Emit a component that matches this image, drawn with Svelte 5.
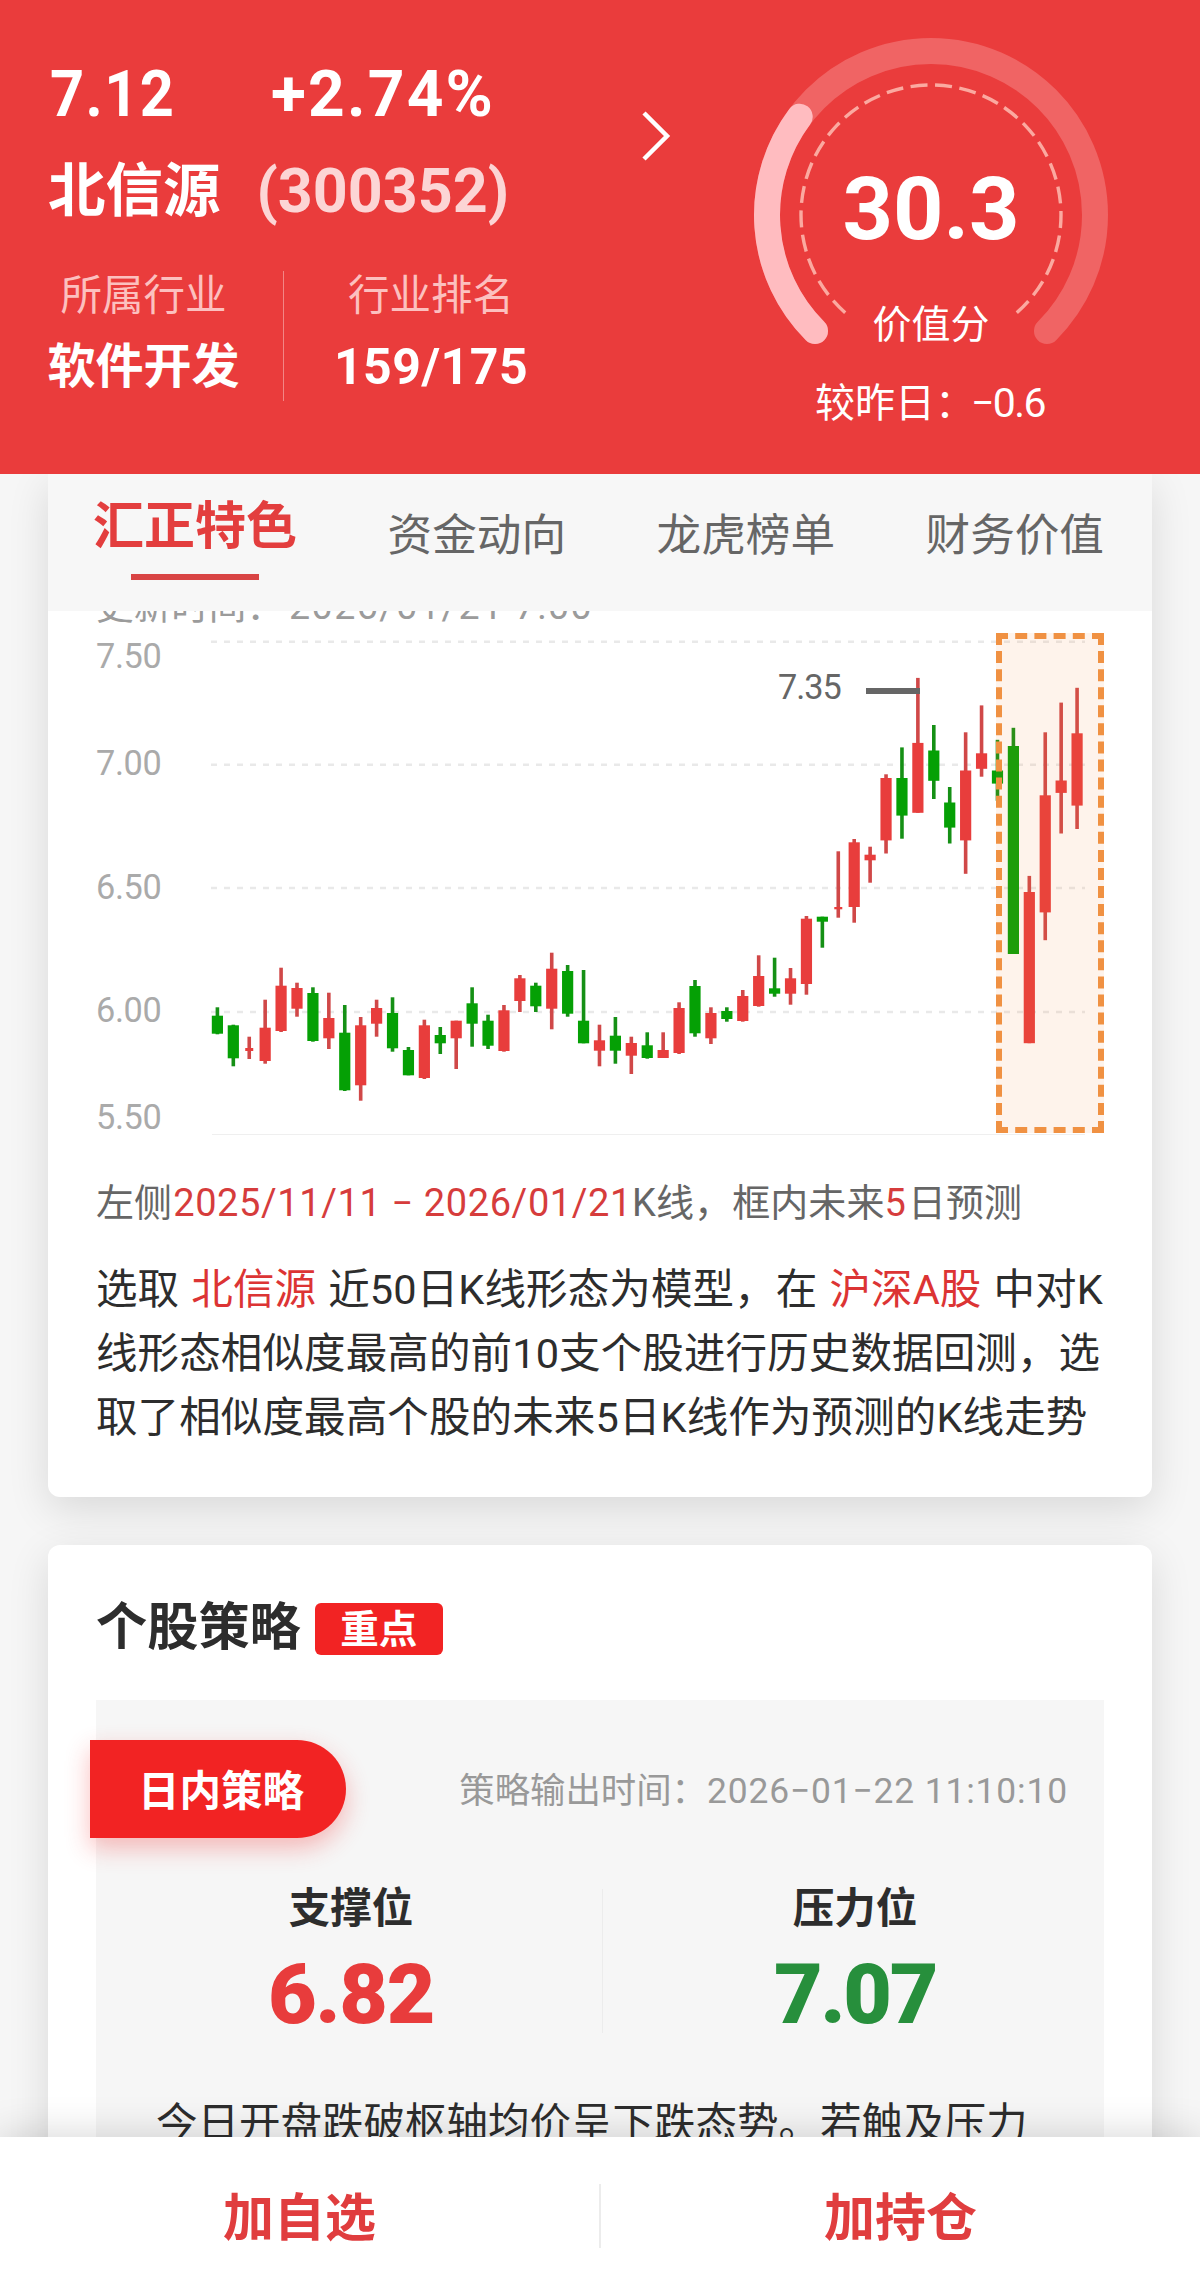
<script>
  const tabs = ['汇正特色', '资金动向', '龙虎榜单', '财务价值'];
  const active = 0;

  const gridLines = [641.7, 764.8, 888, 1012];
  const axis = [
    ['7.50', 668],
    ['7.00', 775],
    ['6.50', 899],
    ['6.00', 1022],
    ['5.50', 1129],
  ];

  // Each candle: rising flag, high, body top, body bottom, low
  const candles = [
    [0, 1007.3, 1015.7, 1033.7, 1034.3],
    [0, 1024.7, 1025.3, 1058.3, 1066.3],
    [1, 1036.7, 1048, 1051, 1059],
    [1, 999.7, 1027.7, 1061, 1063.7],
    [1, 967.7, 985.7, 1031, 1032],
    [1, 982.7, 988, 1008.7, 1016.7],
    [0, 987.3, 993, 1041, 1041.7],
    [1, 992.7, 1018, 1038.3, 1049],
    [0, 1005, 1032.7, 1090.3, 1091],
    [1, 1017, 1025.3, 1085.3, 1100.7],
    [1, 999.7, 1008, 1023.7, 1036.7],
    [0, 997.3, 1013, 1048.3, 1051.7],
    [0, 1047, 1050, 1075.3, 1075.3],
    [1, 1019.7, 1025.3, 1078, 1079],
    [0, 1027, 1035, 1043.3, 1054],
    [1, 1020.7, 1020.7, 1038.3, 1069],
    [0, 987.3, 1003.3, 1023.7, 1046.7],
    [0, 1014.7, 1020.7, 1045.7, 1049],
    [1, 1005, 1010.3, 1051, 1051.7],
    [1, 975, 978.3, 1001, 1012],
    [0, 982.7, 985.7, 1006.3, 1012],
    [1, 952.7, 968.7, 1008.7, 1029.3],
    [0, 965, 971, 1013.7, 1016.7],
    [0, 970, 1020.7, 1043.3, 1043.3],
    [1, 1024.7, 1040.3, 1050.7, 1066.3],
    [0, 1017, 1035.7, 1050.7, 1063.7],
    [1, 1036.7, 1043, 1055.7, 1074],
    [0, 1032.3, 1045.3, 1058, 1058.7],
    [1, 1032.3, 1050, 1058, 1058],
    [1, 1002.3, 1008, 1053, 1054],
    [0, 980, 986, 1033.3, 1036.7],
    [1, 1007.3, 1013, 1038.3, 1044],
    [0, 1007.3, 1011, 1019, 1021.7],
    [1, 990, 996, 1021, 1021.7],
    [1, 955.3, 976, 1006, 1006.7],
    [0, 957.7, 988.3, 993.7, 996.7],
    [1, 968, 978.3, 993.7, 1004.7],
    [1, 916, 918.7, 984, 994.7],
    [0, 916.7, 916.7, 921.7, 947.7],
    [1, 851.3, 907, 909.3, 917.7],
    [1, 839, 842.3, 907, 922.7],
    [1, 846.7, 854.7, 860.3, 882.7],
    [1, 774.3, 778, 840.4, 853.5],
    [0, 747.4, 778, 815.6, 838.7],
    [1, 677.9, 742.9, 812.8, 812.8],
    [0, 725, 750.5, 780.8, 799],
    [0, 787, 802.5, 827.6, 843.5],
    [1, 732.3, 770.5, 840.4, 873.8],
    [1, 705.4, 753.3, 768.8, 776.7],
    [0, 739.8, 770.5, 783.6, 800.8],
    [0, 727.8, 746, 954, 954],
    [1, 875.9, 892, 1043.2, 1043.2],
    [1, 732.3, 795.3, 912.4, 940.2],
    [1, 702.6, 780.5, 792.9, 833.5],
    [1, 687.8, 733.3, 805.6, 829],
  ].map(([up, high, top, bottom, low], i) => ({
    up: up === 1,
    high,
    top,
    bottom,
    low,
    x: 217.4 + i * 15.92,
    // dojis are drawn with a narrower body
    half: bottom - top < 4 ? 4 : 5.6,
  }));

  // Gauge arcs; angles are degrees clockwise from 12 o'clock
  function arc(r, from, to) {
    const at = (a) => {
      const t = (a * Math.PI) / 180;
      return `${(191 + r * Math.sin(t)).toFixed(2)} ${(215 - r * Math.cos(t)).toFixed(2)}`;
    };
    return `M${at(from)}A${r} ${r} 0 ${to - from > 180 ? 1 : 0} 1 ${at(to)}`;
  }
  const score = 30.3;
  const track = arc(164, -135, 135);
  const progress = arc(164, -135, -135 + 2.7 * score);
  const dashes = arc(130, -138.7, 138.7);
</script>

<div class="page">
  <header>
    <div class="stock">
      <div class="quote"><span class="price">7.12</span><span class="change">+2.74%</span></div>
      <div class="name"><span>北信源</span><span class="code">(300352)</span></div>
      <div class="stats">
        <div class="stat first"><small>所属行业</small><strong>软件开发</strong></div>
        <div class="stat second"><small>行业排名</small><strong class="rank">159/175</strong></div>
      </div>
    </div>
    <svg class="chevron" width="40" height="60" viewBox="0 0 40 60">
      <path d="M5 7L28 30L5 53" />
    </svg>
    <svg class="gauge" width="382" height="474" viewBox="0 0 382 474">
      <path class="track" d={track} />
      <path class="progress" d={progress} />
      <path class="ticks" d={dashes} />
      <text class="score" x="191" y="239">{score}</text>
      <text class="score-label" x="191" y="338">价值分</text>
      <text class="delta" x="75" y="417">较昨日：</text>
      <text class="delta num" x="231" y="417">−0.6</text>
    </svg>
  </header>

  <main>
    <section class="card feature">
      <nav>
        {#each tabs as tab, i}
          <span class="tab" class:active={i === active}>{tab}</span>
        {/each}
      </nav>
      <div class="updated"><span>更新时间：<b>2026/01/21 7:00</b></span></div>
      <div class="chart">
        <svg width="1104" height="535" viewBox="48 625 1104 535">
          {#each gridLines as y}
            <line class="grid" x1="211" x2="1085" y1={y} y2={y} />
          {/each}
          <line class="base" x1="212" x2="1085" y1="1134.5" y2="1134.5" />
          {#each axis as [label, y]}
            <text class="axis" x="96" {y}>{label}</text>
          {/each}
          {#each candles as c}
            <g class:up={c.up} class="candle">
              <rect class="wick" x={c.x - 1.8} y={c.high} width="3.6" height={c.low - c.high} />
              <rect x={c.x - c.half} y={c.top} width={c.half * 2} height={c.bottom - c.top} />
            </g>
          {/each}
          <rect class="peak-line" x="866" y="688" width="54" height="6" />
          <text class="peak" x="778" y="699">7.35</text>
        </svg>
        <div class="forecast"></div>
      </div>
      <p class="caption">左侧<em class="range">2025/11/11 − 2026/01/21</em>K线，框内未来<em class="days">5</em>日预测</p>
      <p class="desc">
        <span>选取 <em>北信源</em> 近50日K线形态为模型，在 <em>沪深A股</em> 中对K</span>
        <span>线形态相似度最高的前10支个股进行历史数据回测，选</span>
        <span>取了相似度最高个股的未来5日K线作为预测的K线走势</span>
      </p>
    </section>

    <section class="card strategy">
      <div class="title"><h2>个股策略</h2><span class="badge">重点</span></div>
      <div class="panel">
        <div class="bar">
          <span class="ribbon">日内策略</span>
          <span class="time">策略输出时间：<b>2026−01−22 11:10:10</b></span>
        </div>
        <div class="levels">
          <div class="level"><span>支撑位</span><strong class="support">6.82</strong></div>
          <div class="level right"><span>压力位</span><strong class="resist">7.07</strong></div>
        </div>
        <p class="note">今日开盘跌破枢轴均价呈下跌态势。若触及压力</p>
      </div>
    </section>
  </main>

  <footer>
    <span class="action">加自选</span>
    <i></i>
    <span class="action">加持仓</span>
  </footer>
</div>

<style>
  .page {
    width: 1200px;
    height: 2295px;
    display: flex;
    flex-direction: column;
    overflow: hidden;
    background: #f6f6f6;
    color: #2d2d2d;
    font-family: Roboto, 'Noto Sans CJK SC', sans-serif;
    white-space: nowrap;
  }
  em, b, small, i { font-style: normal; font-weight: inherit; }
  p, h2 { margin: 0; }

  header {
    position: relative;
    z-index: 2;
    flex: none;
    height: 474px;
    display: flex;
    background: #ea3c3c;
    color: #fff;
  }
  .stock { width: 589px; padding: 63px 0 0 50px; }
  .quote {
    display: flex;
    font-size: 64px;
    line-height: 64px;
    font-weight: 700;
  }
  .price { width: 221px; transform: scaleX(0.93); transform-origin: 0 50%; letter-spacing: 1.5px; }
  .change { letter-spacing: 2.2px; }
  .name {
    display: flex;
    margin: 36px 0 0 -2px;
    font-size: 57.5px;
    line-height: 58px;
    font-weight: 700;
  }
  .code {
    margin-left: 36px;
    font-size: 61px;
    line-height: 56px;
    color: #fcd5d5;
  }
  .stats { display: flex; margin-top: 50px; }
  .stat {
    display: flex;
    flex-direction: column;
    align-items: center;
    height: 130px;
    padding-top: 3px;
    box-sizing: border-box;
  }
  .stat small { font-size: 41.5px; line-height: 44px; color: #fcc0bf; }
  .stat strong { margin-top: 24px; font-size: 48px; line-height: 50px; }
  .stat .rank { font-size: 50px; letter-spacing: 0.5px; }
  .first { width: 234px; padding-right: 46px; border-right: 1px solid #f28685; box-sizing: border-box; }
  .second { margin-left: 52px; width: 190px; }
  .chevron { margin: 106px 0 0; fill: none; stroke: #fff; stroke-width: 4.5; }
  .gauge { margin-left: 61px; fill: none; }
  .track { stroke: #f06464; stroke-width: 26; stroke-linecap: round; }
  .progress { stroke: #ffbcc0; stroke-width: 26; stroke-linecap: round; }
  .ticks { stroke: #fba9a0; stroke-width: 3.4; stroke-dasharray: 17 7.5; }
  .gauge text { fill: #fff; }
  .score { font-size: 88px; font-weight: 700; text-anchor: middle; }
  .score-label { font-size: 39px; text-anchor: middle; }
  .delta { font-size: 40px; }
  .num { font-size: 41px; letter-spacing: -1.6px; }

  main { flex: 1; min-height: 0; padding: 0 48px; overflow: hidden; }
  .card {
    background: #fff;
    border-radius: 0 0 12px 12px;
    box-shadow: 0 12px 42px rgba(0, 0, 0, 0.12);
  }
  .feature { height: 1023px; }
  nav {
    display: flex;
    justify-content: space-between;
    height: 137px;
    box-sizing: border-box;
    padding: 28px 48px 0 45px;
    background: #f7f7f7;
  }
  .tab { padding-top: 9px; font-size: 44.6px; line-height: 50px; color: #666; }
  .active {
    display: flex;
    flex-direction: column;
    align-items: center;
    padding-top: 0;
    font-size: 51px;
    font-weight: 700;
    color: #e33e3e;
  }
  .active::after { content: ''; width: 128px; height: 6px; margin-top: 22px; background: #d94444; }
  .updated {
    display: flex;
    align-items: flex-end;
    height: 14px;
    padding-left: 48px;
    overflow: hidden;
    font-size: 37.6px;
    line-height: 38px;
    color: #9b9b9b;
  }
  .updated b { margin-left: 5px; letter-spacing: 1.5px; }
  .chart { position: relative; height: 535px; }
  .chart svg { display: block; }
  .grid { stroke: #e9e9e9; stroke-width: 2.4; stroke-dasharray: 6 7; }
  .base { stroke: #efefef; stroke-width: 1.2; }
  .axis { font-size: 34.3px; fill: #aaa; letter-spacing: -0.4px; }
  .candle { fill: #05a005; }
  .candle.up { fill: #e83d3c; }
  .candle .wick { fill: #159015; }
  .candle.up .wick { fill: #d04848; }
  .peak-line { fill: #666; }
  .peak { font-size: 34.3px; fill: #666; letter-spacing: -1px; }
  .forecast {
    position: absolute;
    left: 948px;
    top: 8px;
    width: 108px;
    height: 500px;
    box-sizing: border-box;
    border: 6px dashed #f09142;
    background: rgba(248, 140, 60, 0.1);
  }
  .caption {
    margin: 22px 0 0 48px;
    font-size: 38px;
    line-height: 42px;
    letter-spacing: 0.1px;
    color: #666;
  }
  .caption em { color: #d63c3c; }
  .caption .range { margin-left: 1px; letter-spacing: 0.6px; }
  .caption .days { letter-spacing: 2px; }
  .desc {
    display: flex;
    flex-direction: column;
    margin: 34px 0 0 48px;
    font-size: 41.5px;
    line-height: 64px;
    letter-spacing: 0.12px;
    word-spacing: 1.6px;
  }
  .desc em { color: #dc3434; }

  .strategy {
    margin-top: 48px;
    height: 700px;
    box-sizing: border-box;
    padding: 57px 48px 0;
    border-radius: 12px;
  }
  .title { display: flex; height: 52px; align-items: center; }
  h2 { font-size: 51.2px; line-height: 54px; }
  .badge {
    width: 128px;
    height: 52px;
    margin: 2px 0 0 14px;
    border-radius: 6px;
    background: #f22323;
    color: #fff;
    font-size: 38.5px;
    line-height: 53px;
    font-weight: 700;
    text-align: center;
  }
  .panel { height: 600px; margin-top: 46px; padding-top: 40px; background: #f6f6f6; }
  .bar { display: flex; justify-content: space-between; align-items: center; padding-right: 36px; }
  .ribbon {
    width: 256px;
    height: 98px;
    margin-left: -6px;
    padding-left: 48px;
    box-sizing: border-box;
    border-radius: 0 49px 49px 0;
    background: #f22323;
    box-shadow: 0 10px 24px rgba(242, 35, 35, 0.3);
    color: #fff;
    font-size: 41.5px;
    line-height: 104px;
    font-weight: 700;
  }
  .time { padding-top: 3px; font-size: 35.4px; line-height: 40px; color: #999; }
  .time b { letter-spacing: 0.85px; }
  .levels { display: flex; margin: 51px -3px 0 3px; }
  .level {
    flex: 1;
    display: flex;
    flex-direction: column;
    align-items: center;
    height: 144px;
    font-size: 41.5px;
    font-weight: 700;
    line-height: 40px;
  }
  .right { border-left: 1.5px solid #ececec; margin-left: -1px; }
  .level strong { margin-top: 32px; font-size: 84px; line-height: 68px; letter-spacing: -1.4px; }
  .support { color: #e83c3c; }
  .level .resist { color: #278f3c; letter-spacing: -2.4px; }
  .note { margin: 66px 0 0 60px; font-size: 41.5px; line-height: 50px; }

  footer {
    position: relative;
    z-index: 2;
    flex: none;
    height: 158px;
    display: flex;
    align-items: center;
    background: #fff;
    box-shadow: 0 -4px 36px rgba(0, 0, 0, 0.15);
  }
  .action {
    flex: 1;
    padding-top: 5px;
    text-align: center;
    font-size: 51px;
    line-height: 60px;
    font-weight: 700;
    color: #e03d3e;
  }
  footer i { width: 2px; height: 64px; background: #ececec; }
</style>
